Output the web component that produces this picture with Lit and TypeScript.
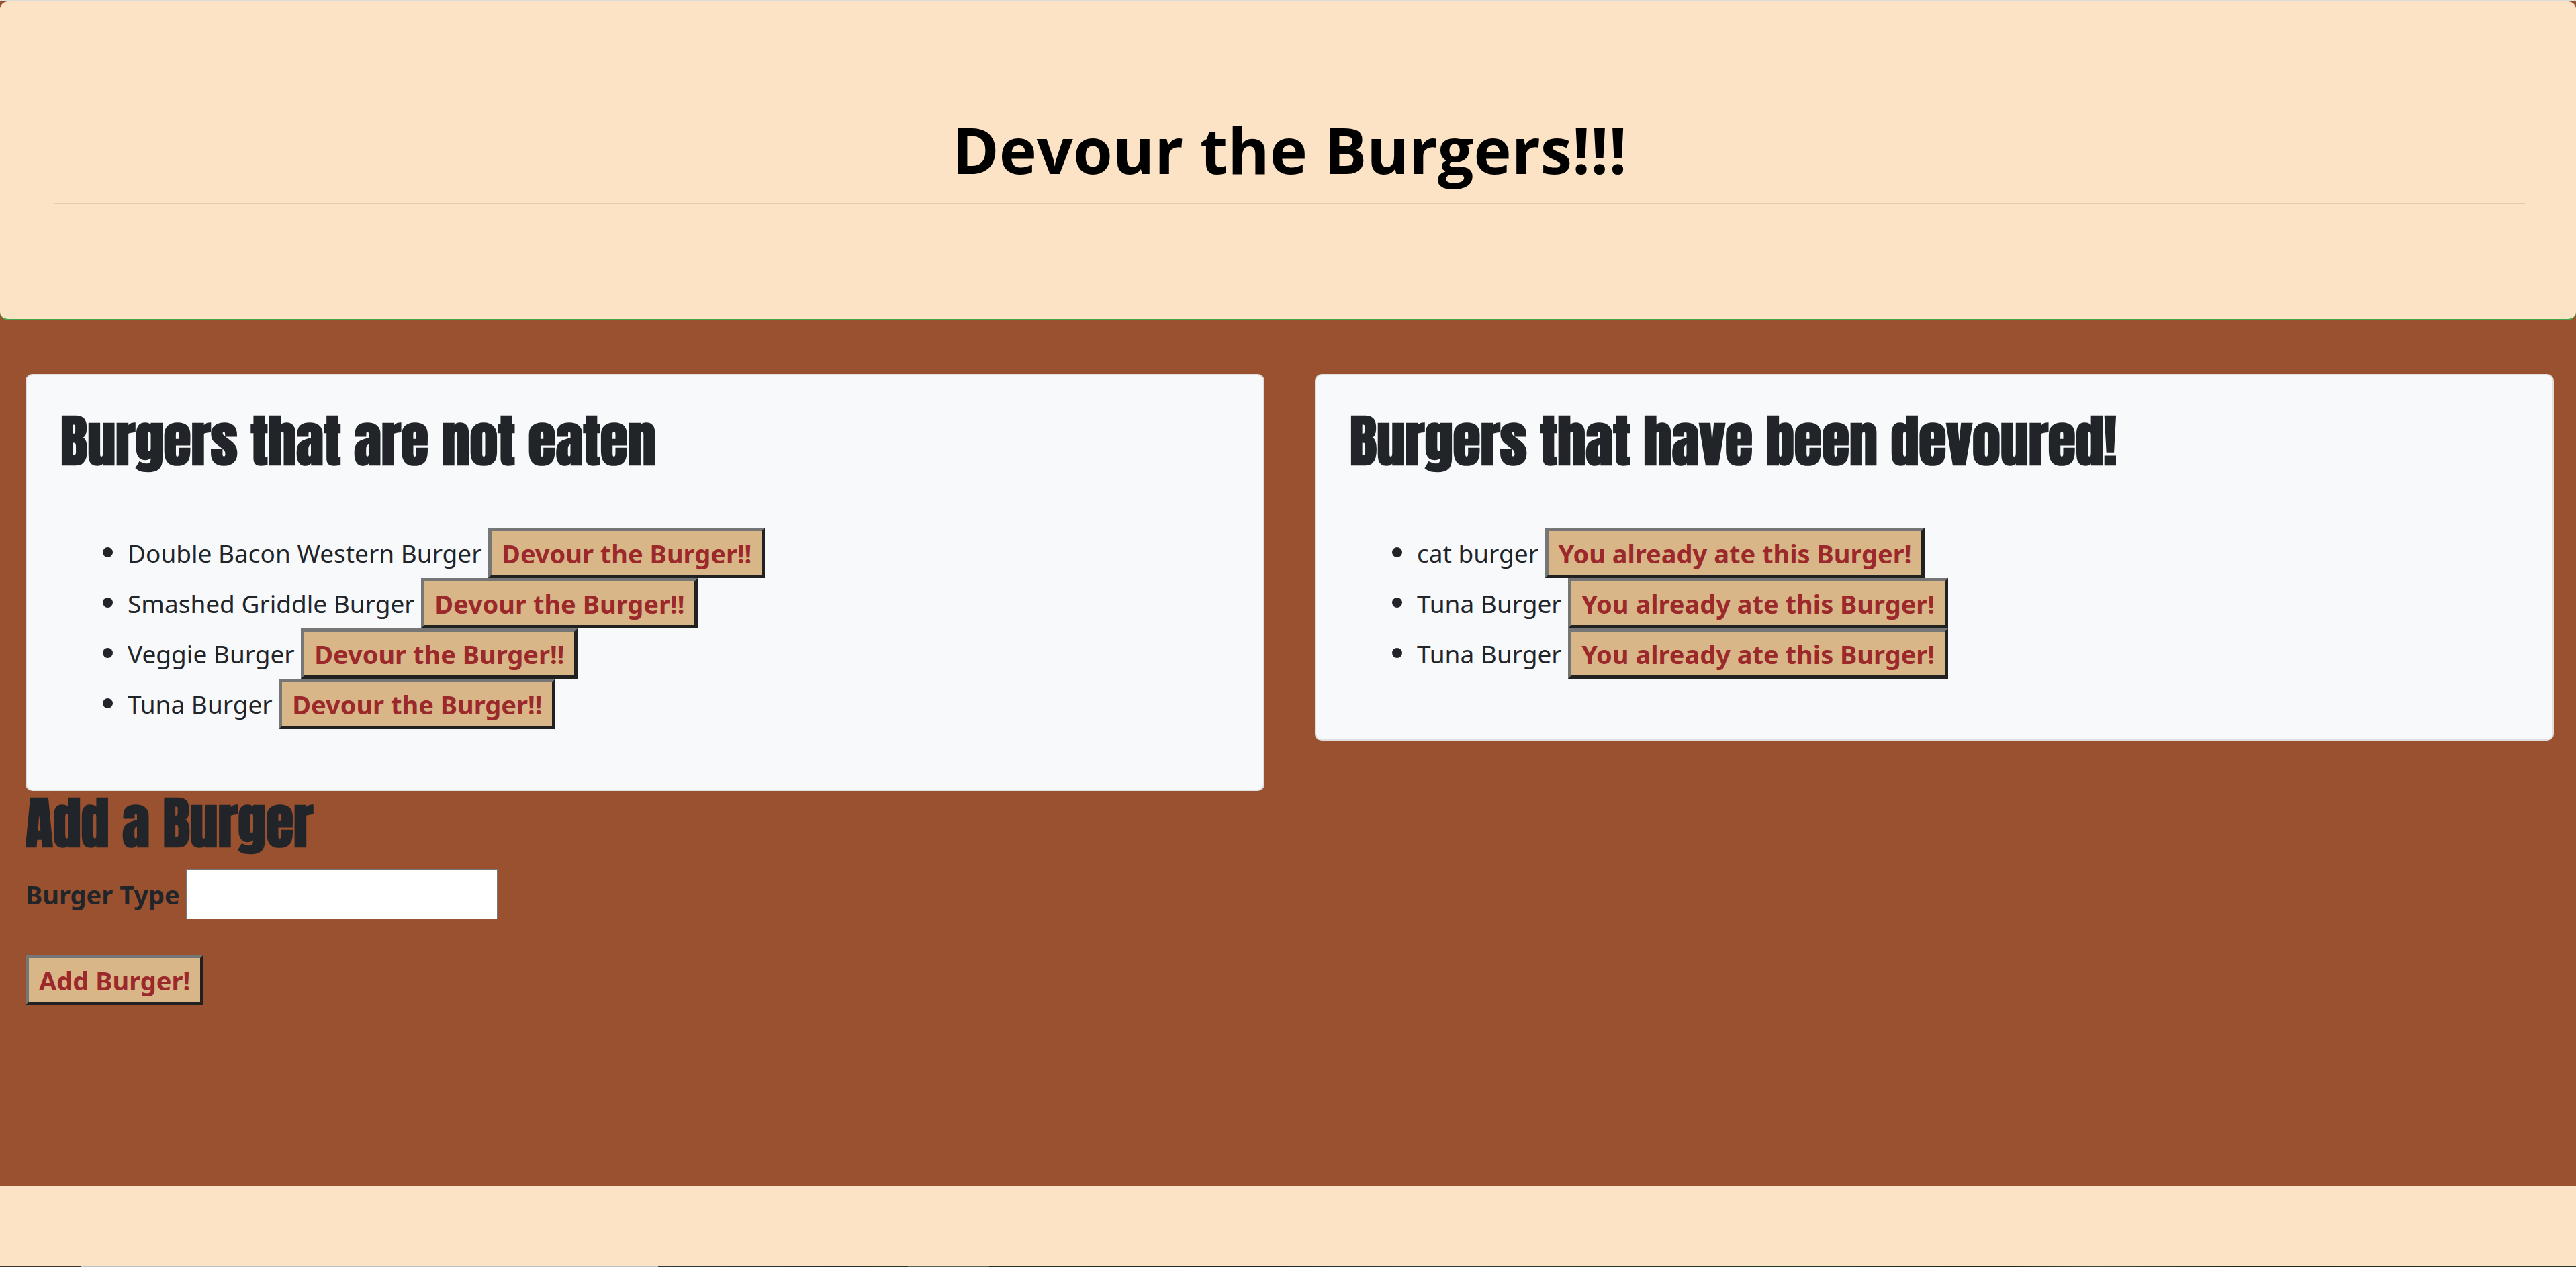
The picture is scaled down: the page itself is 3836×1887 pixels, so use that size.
import { LitElement, html, css } from "lit";
import { customElement, state } from "lit/decorators.js";

interface Burger {
  id: number;
  name: string;
  devoured: boolean;
}

@customElement("app-root")
export class AppRoot extends LitElement {
  static styles = css`
    :host {
      display: flex;
      flex-direction: column;
      box-sizing: border-box;
      min-height: 100vh;
      border-top: 2px solid #dcdcdc;
      background: #9a5130;
      color: #212529;
      font-family: "Segoe UI", "Noto Sans", sans-serif;
      font-size: 37px;
      line-height: 60px;
    }

    * {
      box-sizing: border-box;
    }

    .banner {
      padding: 160px 76px 160px 80px;
      border-bottom: 2px solid #44a648;
      border-radius: 12px;
      background: #fce3c5;
      color: #000;
      text-align: center;
    }

    .banner-title {
      margin: 0;
      padding-bottom: 20px;
      border-bottom: 2px solid #e5ccb1;
      font-family: "Gill Sans MT", "Open Sans", sans-serif;
      font-size: 95px;
      font-weight: 700;
      line-height: 120px;
    }

    .banner-space {
      height: 11px;
    }

    .board {
      display: grid;
      grid-template-columns: 1fr 1fr;
      align-items: start;
      gap: 75px;
      padding: 80px 33px 0 38px;
    }

    .card {
      padding: 50px;
      border: 2px solid #dfdfdf;
      border-radius: 10px;
      background: #f8f9fb;
    }

    .heading {
      margin: 0 0 20px;
      font-family: Impact, Anton, sans-serif;
      font-size: 84px;
      font-weight: 700;
      line-height: 96px;
    }

    .burgers {
      margin: 79px 0 42px;
      padding: 0 0 0 100px;
    }

    .burger {
      height: 75px;
      line-height: 75px;
      white-space: nowrap;
    }

    .burger::marker {
      font-size: 42px;
    }

    .action {
      height: 75px;
      padding: 0 15px;
      border: 5px solid;
      border-color: #767676 #212121 #212121 #767676;
      border-radius: 0;
      background: #d9b688;
      color: #9b282a;
      font-family: inherit;
      font-size: 38px;
      font-weight: 700;
      line-height: 60px;
      vertical-align: top;
    }

    .add {
      padding: 0 38px;
    }

    .field {
      display: flex;
      align-items: center;
      gap: 9px;
      margin-bottom: 53px;
    }

    .label {
      font-size: 38px;
      font-weight: 700;
    }

    .input {
      width: 464px;
      height: 75px;
      padding: 2px 5px;
      border: 1px solid #767676;
      border-radius: 0;
      background: #fff;
      color: inherit;
      font: inherit;
    }

    .footer {
      height: 118px;
      margin-top: auto;
      background: #fce3c5;
    }

    .edge {
      height: 2px;
      background: linear-gradient(
        90deg,
        #3b3828 0 120px,
        #c0c0c0 120px 980px,
        #2d3d3b 980px,
        #202f2a 1240px,
        #293823 1352px,
        #53644f 1352px 1473px,
        #263422 1473px,
        #1c2b26 1900px,
        #2e403c 2100px,
        #24361f 2510px,
        #23392c 2700px,
        #20271a 2980px,
        #46463a 3120px,
        #20271a 3350px,
        #30352a
      );
    }
  `;

  @state() private burgers: Burger[] = [
    { id: 1, name: "Double Bacon Western Burger", devoured: false },
    { id: 2, name: "Smashed Griddle Burger", devoured: false },
    { id: 3, name: "Veggie Burger", devoured: false },
    { id: 4, name: "Tuna Burger", devoured: false },
    { id: 5, name: "cat burger", devoured: true },
    { id: 6, name: "Tuna Burger", devoured: true },
    { id: 7, name: "Tuna Burger", devoured: true },
  ];

  private devour(id: number) {
    this.burgers = this.burgers.map((b) => (b.id === id ? { ...b, devoured: true } : b));
  }

  private add(event: Event) {
    event.preventDefault();
    const input = this.renderRoot.querySelector<HTMLInputElement>("#burger-type")!;
    const name = input.value.trim();
    if (!name) return;
    this.burgers = [...this.burgers, { id: this.burgers.length + 1, name, devoured: false }];
    input.value = "";
  }

  private card(title: string, action: string, devoured: boolean) {
    return html`<section class="card">
      <h2 class="heading">${title}</h2>
      <ul class="burgers">
        ${this.burgers
          .filter((b) => b.devoured === devoured)
          .map(
            (b) => html`<li class="burger">
              ${b.name}
              <button class="action" type="button" @click=${() => this.devour(b.id)}>${action}</button>
            </li>`
          )}
      </ul>
    </section>`;
  }

  render() {
    return html`
      <header class="banner">
        <h1 class="banner-title">Devour the Burgers!!!</h1>
        <div class="banner-space"></div>
      </header>
      <main>
        <div class="board">
          ${this.card("Burgers that are not eaten", "Devour the Burger!!", false)}
          ${this.card("Burgers that have been devoured!", "You already ate this Burger!", true)}
        </div>
        <form class="add" @submit=${this.add}>
          <h2 class="heading">Add a Burger</h2>
          <div class="field">
            <label class="label" for="burger-type">Burger Type</label>
            <input class="input" id="burger-type" type="text" />
          </div>
          <button class="action" type="submit">Add Burger!</button>
        </form>
      </main>
      <footer class="footer"></footer>
      <div class="edge"></div>
    `;
  }
}
